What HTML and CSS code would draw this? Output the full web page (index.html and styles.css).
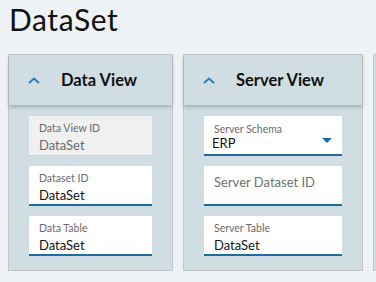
FILE: index.html
```html
<!DOCTYPE html>
<html lang="en">
<head>
  <meta charset="UTF-8" />
  <meta name="viewport" content="width=device-width, initial-scale=1.0"/>
  <title>DataSet</title>
  <link rel="stylesheet" href="styles.css">
</head>
<body>
  <h1 class="page-title">DataSet</h1>

  <div class="panels">
    <div class="panel panel-data">
      <div class="panel-head">
        <svg class="chevron" width="12" height="7" viewBox="0 0 12 7">
          <path d="M1 6 L6 1.5 L11 6" fill="none" stroke="#2c7db3" stroke-width="2"/>
        </svg>
        <span class="panel-title">Data View</span>
      </div>
      <div class="panel-body">
        <div class="field readonly">
          <div class="label">Data View ID</div>
          <div class="value">DataSet</div>
        </div>
        <div class="field">
          <div class="label">Dataset ID</div>
          <div class="value">DataSet</div>
        </div>
        <div class="field">
          <div class="label">Data Table</div>
          <div class="value">DataSet</div>
        </div>
      </div>
    </div>

    <div class="panel panel-server">
      <div class="panel-head">
        <svg class="chevron" width="12" height="7" viewBox="0 0 12 7">
          <path d="M1 6 L6 1.5 L11 6" fill="none" stroke="#2c7db3" stroke-width="2"/>
        </svg>
        <span class="panel-title">Server View</span>
      </div>
      <div class="panel-body">
        <div class="field select">
          <div class="label">Server Schema</div>
          <div class="value">ERP</div>
          <span class="caret"></span>
        </div>
        <div class="field empty">
          <div class="placeholder">Server Dataset ID</div>
        </div>
        <div class="field">
          <div class="label">Server Table</div>
          <div class="value">DataSet</div>
        </div>
      </div>
    </div>

    <div class="panel panel-more"></div>
  </div>
</body>
</html>
```

FILE: styles.css
```css
body {
  margin: 0;
  background: #eef2f5;
  font-family: 'Lato', 'Noto Sans', sans-serif;
  color: #111;
  overflow: hidden;
}

.page-title {
  margin: 0;
  padding: 1px 0 0 9px;
  height: 54px;
  box-sizing: border-box;
  font-size: 30px;
  font-weight: normal;
  line-height: 36px;
  letter-spacing: 0.6px;
}

.panels {
  display: flex;
  gap: 10px;
  padding-left: 8px;
  overflow: hidden;
}

.panel {
  flex: none;
  height: 217px;
  box-sizing: border-box;
  background: #d0dde2;
  border: 1px solid #c3c6c8;
}

.panel-data { width: 165px; }
.panel-server { width: 180px; }
.panel-more { width: 40px; }

.panel-head {
  height: 50px;
  display: flex;
  align-items: center;
  box-shadow: 0 2px 4px rgba(0, 0, 0, 0.22);
  position: relative;
}

.chevron {
  margin-left: 19px;
}

.panel-title {
  font-size: 16.5px;
  font-weight: bold;
  margin-left: 21px;
}

.panel-body {
  display: flex;
  flex-direction: column;
  gap: 10px;
  padding: 11px 20px 0;
}

.field {
  position: relative;
  height: 40px;
  box-sizing: border-box;
  background: #fff;
  border-bottom: 2px solid #1f6c9f;
  padding: 6px 10px 0;
}

.field.readonly {
  background: #f0f0f0;
  border-bottom: 1px solid #cfcfcf;
}

.label {
  font-size: 10.5px;
  line-height: 13px;
  color: #6b6b6b;
}

.value {
  font-size: 13px;
  line-height: 20px;
  color: #111;
}

.readonly .value {
  color: #6b6b6b;
}

.select {
  padding-top: 7px;
}

.select .value {
  line-height: 15px;
  margin-left: -2px;
}

.placeholder {
  font-size: 13px;
  line-height: 17px;
  color: #707070;
  padding-top: 2px;
}

.caret {
  position: absolute;
  right: 10px;
  top: 22px;
  border-left: 5px solid transparent;
  border-right: 5px solid transparent;
  border-top: 5px solid #1f6c9f;
}
```
